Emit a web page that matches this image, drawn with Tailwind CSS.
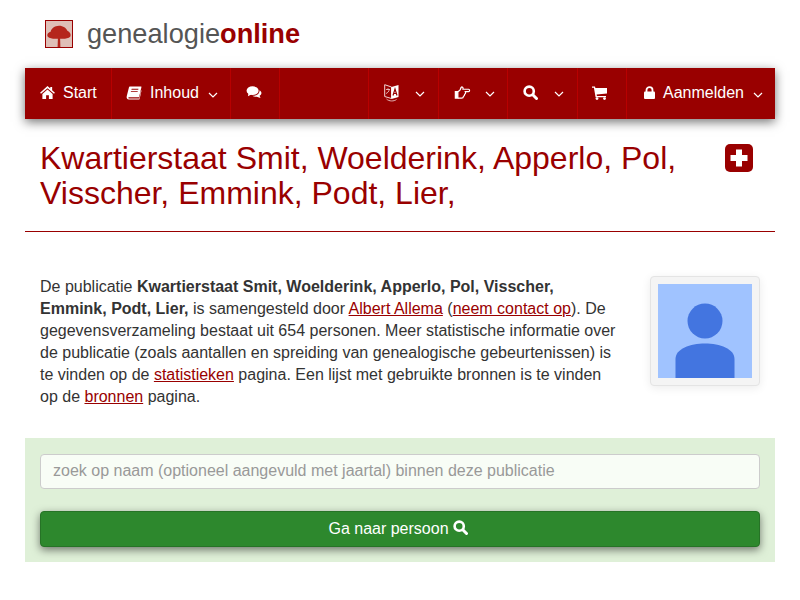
<!DOCTYPE html>
<html>
<head>
<meta charset="utf-8"/>
<title>Genealogie Online</title>
<script src="https://cdn.jsdelivr.net/npm/@tailwindcss/browser@4"></script>
</head>
<body class="bg-white font-['Liberation_Sans',Arial,sans-serif] text-[#333]">
<div class="mx-[25px] w-[750px]">
  <!-- logo -->
  <div class="flex h-[68px] items-center pl-[20px]">
    <svg class="w-[28px] h-[28px] border border-[#990000] bg-[#dfbfb7]" viewBox="0 0 28 28">
      <path d="M12.5 28 L12.8 19 C9 19.5 4 19 2 17 C0.5 14.5 2.5 12 5 11.5 C5.5 8 9.5 5 14 5 C18.5 5 22 7.5 23 10.5 C25.5 11.5 27.5 14.5 26 17 C24 19 19 19.5 15.2 19 L15.5 28 Z" fill="#b5261c"/>
    </svg>
    <div class="ml-[14px] text-[27.2px] leading-[32px] text-[#555]">genealogie<span class="font-bold text-[#990000]">online</span></div>
  </div>

  <!-- nav -->
  <nav class="flex h-[51px] bg-[#990000] text-white text-[16px] shadow-[0_3px_10px_rgba(0,0,0,0.55)]">
    <a class="flex w-[86px] items-center gap-[8px] pl-[15px] pb-[2px]">
      <svg class="w-[15px] h-[13px] fill-white" viewBox="0 0 16 14"><path d="M8 0 L11 2.7 V1 H13 V4.5 L16 7.3 L15 8.4 L8 2.3 L1 8.4 L0 7.3 Z M8 3.7 L13.5 8.5 V14 H9.5 V10 H6.5 V14 H2.5 V8.5 Z"/></svg>
      Start
    </a>
    <a class="flex w-[119px] items-center border-l border-[#b80000] pl-[14px] pb-[2px]">
      <svg class="w-[16px] h-[14px] fill-white" viewBox="0 0 16 15"><path d="M3.5 0.5 H15.5 C16 0.5 16 1 15.9 1.5 L13.5 11.5 C13.4 12 13 12 12.5 12 H2.5 C1.8 12 1.6 13.4 2.6 13.4 H13.6 L15.6 4.5 L16 5 L14 14 C13.9 14.5 13.5 14.5 13 14.5 H2.5 C0.8 14.5 -0.3 13 0.2 11 L2.5 2 C2.7 1.2 3 0.5 3.5 0.5 Z M5.5 3 L5.2 4 H12.5 L12.8 3 Z M4.8 5.5 L4.5 6.5 H11.8 L12.1 5.5 Z" fill-rule="evenodd"/></svg>
      <span class="ml-[8px]">Inhoud</span>
      <svg class="ml-[9px] w-[10px] h-[6px] mt-[4px]" viewBox="0 0 10 6" fill="none" stroke="white" stroke-width="1.2"><path d="M1 1 L5 5 L9 1"/></svg>
    </a>
    <a class="flex w-[49px] items-center justify-center border-l border-[#b80000] pb-[2px] pr-[2px]">
      <svg class="w-[16px] h-[13px] fill-white" viewBox="0 0 16 14"><ellipse cx="6.5" cy="5" rx="6.5" ry="4.6"/><path d="M2 7.5 L1.5 11 L6 8.5 Z"/><path d="M14 4.5 C15.5 5.5 16 6.5 16 7.5 C16 8.8 15 10 14 10.5 L15 13 L11 11.5 C9.5 11.7 7.5 11.3 6.3 10.5 C10 10.5 14 9 14 4.5 Z"/></svg>
    </a>
    <div class="w-[89px] border-l border-[#b80000]"></div>
    <a class="flex w-[70px] items-center border-l border-[#b80000] pl-[15px] pb-[2px]">
      <svg class="w-[15px] h-[18px]" viewBox="0 0 15 18"><path d="M0.7 0.7 L7.5 3 L7.5 14.5 L0.7 12.5 Z" fill="#990000" stroke="#f0d6d6" stroke-width="1"/><path d="M7.5 3 L14.5 1 L14.5 13 L7.5 15 Z" fill="white"/><path d="M9 11.5 L11 5 L13 11.5 M9.8 9.5 H12.2" stroke="#990000" stroke-width="1.2" fill="none"/><path d="M2 5.5 H6 M4 4.2 V5.5 M5.3 5.5 C5 7.5 3.5 9 2 9.5" stroke="#f3d9d9" stroke-width="0.8" fill="none"/><path d="M2.5 15 C5 17.5 10 17.5 12.5 15.5" stroke="#e8c4c4" stroke-width="0.9" fill="none"/></svg>
      <svg class="ml-[16px] w-[10px] h-[6px] mt-[2px]" viewBox="0 0 10 6" fill="none" stroke="white" stroke-width="1.2"><path d="M1 1 L5 5 L9 1"/></svg>
    </a>
    <a class="flex w-[69px] items-center border-l border-[#b80000] pl-[15px] pb-[2px]">
      <svg class="w-[17px] h-[13px]" viewBox="0 0 17 14" fill="none" stroke="white" stroke-width="1.3"><path d="M0.8 6 H3.5 V13 H0.8 Z" fill="white"/><path d="M3.5 6 C5 5.5 6.5 4 7 1.5 C8 0.5 9.5 1.5 9 3.5 H15 C16.5 3.5 16.5 6 15 6 H11.5 C12 7 11.5 8.5 10.8 9 C10.8 10 10.3 11 9.5 11.2 C9.5 12.5 8.5 13 7.5 13 H3.5"/></svg>
      <svg class="ml-[14px] w-[10px] h-[6px] mt-[2px]" viewBox="0 0 10 6" fill="none" stroke="white" stroke-width="1.2"><path d="M1 1 L5 5 L9 1"/></svg>
    </a>
    <a class="flex w-[70px] items-center border-l border-[#b80000] pl-[15px] pb-[2px]">
      <svg class="w-[15px] h-[15px]" viewBox="0 0 15 15" fill="none" stroke="white"><circle cx="6.2" cy="6.2" r="4.6" stroke-width="2.6"/><path d="M9.8 9.8 L13.5 13.5" stroke-width="3" stroke-linecap="round"/></svg>
      <svg class="ml-[16px] w-[10px] h-[6px] mt-[2px]" viewBox="0 0 10 6" fill="none" stroke="white" stroke-width="1.2"><path d="M1 1 L5 5 L9 1"/></svg>
    </a>
    <a class="flex w-[49px] items-center justify-center border-l border-[#b80000] pb-[2px] pr-[5px]">
      <svg class="w-[15px] h-[14px] fill-white" viewBox="0 0 15 14"><path d="M0 0.5 H3 L3.4 2 H15 V7.5 L4.6 8.6 L4.9 10 H14 V11.2 H3.6 L1.9 1.8 H0 Z"/><circle cx="5" cy="12.6" r="1.4"/><circle cx="12.5" cy="12.6" r="1.4"/></svg>
    </a>
    <a class="flex flex-1 items-center border-l border-[#b80000] pl-[17px] pb-[2px]">
      <svg class="w-[11px] h-[13px]" viewBox="0 0 11 13"><path d="M2.5 6 V4 C2.5 0.2 8.5 0.2 8.5 4 V6" fill="none" stroke="white" stroke-width="1.8"/><rect x="0" y="5.5" width="11" height="7.5" rx="1" fill="white"/></svg>
      <span class="ml-[8px]">Aanmelden</span>
      <svg class="ml-[9px] w-[10px] h-[6px] mt-[4px]" viewBox="0 0 10 6" fill="none" stroke="white" stroke-width="1.2"><path d="M1 1 L5 5 L9 1"/></svg>
    </a>
  </nav>

  <!-- title -->
  <div class="flex justify-between border-b border-[#990000] pl-[15px] pr-[22px] pt-[22px] pb-[20px]">
    <h1 class="w-[650px] text-[32px] leading-[35px] text-[#990000]">Kwartierstaat Smit, Woelderink, Apperlo, Pol, Visscher, Emmink, Podt, Lier,</h1>
    <svg class="w-[28px] h-[28px] mt-[3px]" viewBox="0 0 28 28"><rect width="28" height="28" rx="5" fill="#990000"/><path d="M11 5.5 H17 V11 H22.5 V17 H17 V22.5 H11 V17 H5.5 V11 H11 Z" fill="white"/></svg>
  </div>

  <!-- intro -->
  <div class="flex justify-between px-[15px] pt-[44px]">
    <p class="w-[580px] text-[16px] leading-[22px] text-[#333]">De publicatie <b>Kwartierstaat Smit, Woelderink, Apperlo, Pol, Visscher, Emmink, Podt, Lier,</b> is samengesteld door <a class="text-[#990000] underline">Albert Allema</a> (<a class="text-[#990000] underline">neem contact op</a>). De gegevensverzameling bestaat uit 654 personen. Meer statistische informatie over de publicatie (zoals aantallen en spreiding van genealogische gebeurtenissen) is te vinden op de <a class="text-[#990000] underline">statistieken</a> pagina. Een lijst met gebruikte bronnen is te vinden op de <a class="text-[#990000] underline">bronnen</a> pagina.</p>
    <div class="h-[110px] w-[110px] rounded-[4px] border border-[#e4e4e4] bg-[#f4f4f4] p-[7px] shadow-[0_2px_10px_rgba(0,0,0,0.08)]">
      <svg class="h-[94px] w-[94px]" viewBox="0 0 94 94"><rect width="94" height="94" fill="#a0c3ff"/><circle cx="47" cy="37" r="17.5" fill="#4375e0"/><path d="M17.5 94 V75 C17.5 65 32 59.5 47 59.5 C62 59.5 76.5 65 76.5 75 V94 Z" fill="#4375e0"/></svg>
    </div>
  </div>

  <!-- search -->
  <div class="mt-[30px] bg-[#dff0d8] px-[15px] pt-[16px] pb-[15px]">
    <input class="block h-[35px] w-full rounded-[4px] border border-[#ccc] bg-[#f8fdf6] px-[12px] pb-[2px] text-[16px] text-[#555] placeholder:text-[#999]" placeholder="zoek op naam (optioneel aangevuld met jaartal) binnen deze publicatie"/>
    <button class="mt-[22px] flex h-[36px] w-full items-center justify-center gap-[4px] rounded-[4px] border border-[#267326] bg-[#2d882d] pr-[4px] text-[16px] text-white shadow-[0_3px_8px_rgba(0,0,0,0.5)]">Ga naar persoon
      <svg class="mb-[3px] w-[15px] h-[15px]" viewBox="0 0 15 15" fill="none" stroke="white"><circle cx="6.2" cy="6.2" r="4.6" stroke-width="2.6"/><path d="M9.8 9.8 L13.5 13.5" stroke-width="3" stroke-linecap="round"/></svg>
    </button>
  </div>
</div>
</body>
</html>
